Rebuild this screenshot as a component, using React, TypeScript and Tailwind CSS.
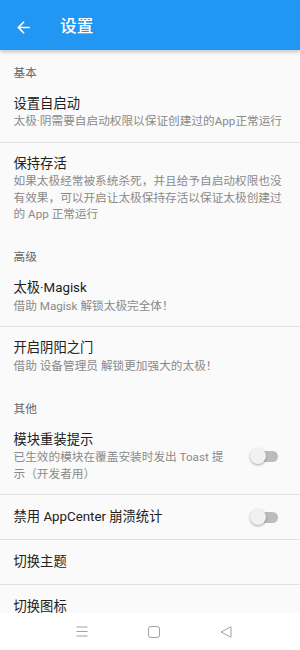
import React from "react";

function Switch() {
  return (
    <div className="relative w-[40px] h-[16px] shrink-0 ml-[16px]">
      <div className="absolute left-[5px] top-[2.5px] w-[27px] h-[11px] rounded-full bg-[#bcbcbc]" />
      <div className="absolute left-[4px] top-0 w-[16px] h-[16px] rounded-full bg-[#f1f1f1] shadow-[0_1px_2.5px_rgba(0,0,0,0.35)]" />
    </div>
  );
}

function Category({ label }: { label: string }) {
  return (
    <div className="pl-[13.5px] pt-[15.5px] pb-[3px] text-[11.67px] leading-[14px] text-[#666666]">
      {label}
    </div>
  );
}

function Pref({ title, summary, toggle }: { title: string; summary?: string; toggle?: boolean }) {
  return (
    <div
      className={
        summary
          ? "flex items-center pl-[13.5px] pr-[14px] pt-[12px] pb-[12px]"
          : "flex items-center pl-[13.5px] pr-[14px] pt-[12.75px] pb-[12.75px]"
      }
    >
      <div className="flex-1 min-w-0">
        <div className="text-[13.3px] leading-[18.5px] text-[#212121]">{title}</div>
        {summary && (
          <div className="text-[11.67px] leading-[16.5px] text-[#8a8a8a]">{summary}</div>
        )}
      </div>
      {toggle && <Switch />}
    </div>
  );
}

function Divider() {
  return <div className="h-px bg-[#e2e2e2]" />;
}

export default function App() {
  return (
    <div className="w-[300px] h-[650px] flex flex-col bg-[#fafafa] overflow-hidden font-[family-name:Roboto,'Noto_Sans_CJK_SC',sans-serif]">
      <header className="relative z-10 h-[50px] shrink-0 bg-[#2196f3] flex items-center pt-[5px] shadow-[0_2px_4px_rgba(0,0,0,0.22)]">
        <svg className="ml-[14px] w-[19px] h-[19px]" viewBox="0 0 24 24" fill="white">
          <path d="M20 11H7.83l5.59-5.59L12 4l-8 8 8 8 1.41-1.41L7.83 13H20v-2z" />
        </svg>
        <span className="ml-[27px] text-white text-[16.7px] font-medium leading-none">设置</span>
      </header>
      <main className="flex-1 overflow-hidden">
        <Category label="基本" />
        <Pref title="设置自启动" summary="太极·阴需要自启动权限以保证创建过的App正常运行" />
        <Divider />
        <Pref
          title="保持存活"
          summary="如果太极经常被系统杀死，并且给予自启动权限也没有效果，可以开启让太极保持存活以保证太极创建过的 App 正常运行"
        />
        <Category label="高级" />
        <Pref title="太极·Magisk" summary="借助 Magisk 解锁太极完全体！" />
        <Divider />
        <Pref title="开启阴阳之门" summary="借助 设备管理员 解锁更加强大的太极！" />
        <Category label="其他" />
        <Pref title="模块重装提示" summary="已生效的模块在覆盖安装时发出 Toast 提示（开发者用）" toggle />
        <Divider />
        <Pref title="禁用 AppCenter 崩溃统计" toggle />
        <Divider />
        <Pref title="切换主题" />
        <Divider />
        <Pref title="切换图标" />
      </main>
      <nav className="h-[37px] shrink-0 bg-white flex items-center pl-[46px]">
        <div className="w-[72px] flex justify-center">
          <svg width="12" height="11" viewBox="0 0 12 11" fill="none" stroke="#a0a0a0" strokeWidth="1">
            <path d="M0.5 1H11.5M0.5 5.5H11.5M0.5 10H11.5" />
          </svg>
        </div>
        <div className="w-[72px] flex justify-center">
          <svg width="12" height="12" viewBox="0 0 12 12" fill="none" stroke="#a0a0a0" strokeWidth="1">
            <rect x="0.5" y="0.5" width="11" height="11" rx="2.5" />
          </svg>
        </div>
        <div className="w-[72px] flex justify-center">
          <svg width="12" height="12" viewBox="0 0 12 12" fill="none" stroke="#a0a0a0" strokeWidth="1">
            <path d="M11 0.8L1 6L11 11.2Z" strokeLinejoin="round" />
          </svg>
        </div>
      </nav>
    </div>
  );
}
